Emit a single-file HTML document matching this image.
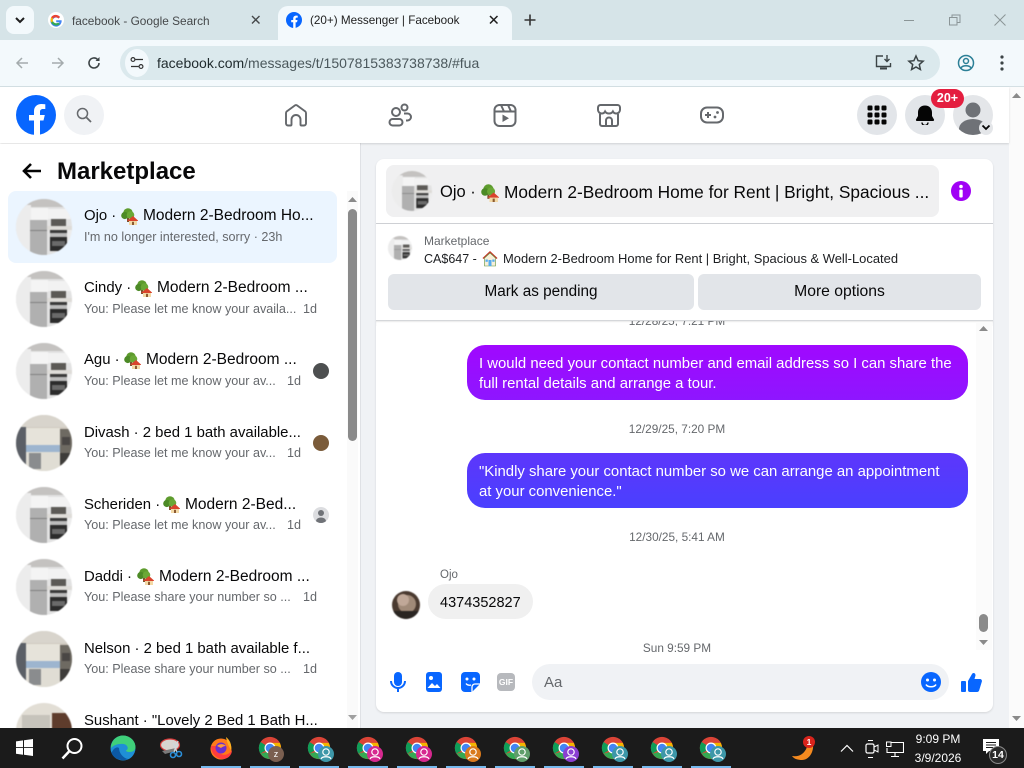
<!DOCTYPE html>
<html><head><meta charset="utf-8"><title>Messenger</title>
<style>
*{box-sizing:border-box}
html,body{margin:0;padding:0;width:1024px;height:768px;overflow:hidden;background:#fff;font-family:"Liberation Sans",sans-serif}
.a{position:absolute}
.t{position:absolute;white-space:nowrap;line-height:20px;height:20px}
.n{font-size:14.9px;color:#080809;margin-top:1px}
.m{font-size:15.5px;color:#080809;margin-top:1px}
.s{font-size:12.6px;color:#65686c;margin-top:1px}
.c{border-radius:50%;overflow:hidden}
svg{position:absolute;overflow:hidden}
svg.c{filter:blur(.5px)}
.ts{font-size:11.8px;color:#65686c;text-align:center;left:377px;width:600px}
.ul{position:absolute;top:766px;width:40px;height:2px;background:#76b9ed}
.b{font-size:14.9px;color:#fff;margin-top:1px}
</style></head><body>
<svg width="0" height="0" style="position:absolute">
<defs>
<symbol id="k1" viewBox="0 0 56 56">
<rect width="56" height="56" fill="#e2e2e2"/><rect width="56" height="8" fill="#c4c2c0"/>
<rect x="0" y="6" width="15" height="50" fill="#ececec"/>
<rect x="15" y="9" width="17" height="12" fill="#f4f4f4"/><rect x="32" y="10" width="24" height="10" fill="#f2f2f2"/>
<rect x="14" y="21" width="17" height="35" fill="#b0b0b0"/><rect x="14" y="31" width="17" height="1" fill="#808080"/>
<rect x="35" y="20" width="15" height="7" fill="#5c5a56"/>
<rect x="31" y="27" width="25" height="4" fill="#dedcd8"/>
<rect x="34" y="31" width="17" height="3" fill="#3a3a3a"/><rect x="34" y="34" width="17" height="4" fill="#bbb"/><rect x="34" y="38" width="17" height="14" fill="#2c2c2c"/><rect x="36" y="42" width="13" height="5" fill="#6a6a6a"/>
<rect x="51" y="31" width="5" height="25" fill="#ececec"/>
</symbol>
<symbol id="k2" viewBox="0 0 56 56">
<rect width="56" height="56" fill="#cfc9bf"/><rect width="56" height="12" fill="#d8d4cc"/>
<rect x="0" y="12" width="10" height="44" fill="#5b5f66"/>
<rect x="10" y="13" width="34" height="17" fill="#e6e3da"/><rect x="10" y="30" width="34" height="7" fill="#9db5cf"/>
<rect x="10" y="37" width="34" height="19" fill="#e0ddd4"/><rect x="13" y="38" width="12" height="16" fill="#8a8c8e"/>
<rect x="44" y="14" width="12" height="42" fill="#6e6a62"/><rect x="46" y="22" width="8" height="8" fill="#4a4745"/><rect x="44" y="38" width="12" height="12" fill="#3e3c3a"/>
</symbol>
<symbol id="k3" viewBox="0 0 56 56">
<rect width="56" height="56" fill="#e2ded5"/><rect x="36" y="10" width="20" height="40" fill="#5e3c2c"/><rect x="6" y="12" width="28" height="40" fill="#c6c3bb"/>
</symbol>
<symbol id="th" viewBox="0 0 17 17">
<circle cx="7" cy="5" r="4.800" fill="#5d9b2d"/><circle cx="3.800" cy="7.500" r="3.600" fill="#4c8a26"/><circle cx="9.500" cy="7" r="3.800" fill="#6aa836"/><rect x="6" y="10" width="2" height="4" fill="#7a5230"/>
<path d="M6.500 12.500 12 8l5 4.500v.5H6.500z" fill="#d9432c"/><rect x="8" y="13" width="8" height="4" fill="#f3d9a6"/><rect x="11" y="13.800" width="2" height="3.200" fill="#8c5a32"/>
</symbol>
<symbol id="cr" viewBox="0 0 28 28">
<circle cx="14" cy="14" r="13" fill="#db4437"/>
<path d="M14 14 2.700 20.500A13 13 0 0 1 3 7z" fill="#0f9d58"/>
<path d="M3 20.600A13 13 0 0 0 14 27l6.500-11.300z" fill="#34a853"/>
<path d="M14 8h11.400A13 13 0 0 1 14 27l6-11z" fill="#f4b400"/>
<circle cx="14" cy="14" r="6.400" fill="#fff"/><circle cx="14" cy="14" r="5" fill="#4285f4"/>
</symbol>
<symbol id="pr" viewBox="0 0 16 16"><circle cx="8" cy="6" r="3.200" fill="none" stroke="#fff" stroke-width="1.200"/><path d="M3 13c1-3 9-3 10 0" fill="none" stroke="#fff" stroke-width="1.200"/></symbol>
</defs>
</svg>

<!-- tab strip -->
<div class="a" style="left:0;top:0;width:1024px;height:40px;background:#d6e4e8"></div>
<div class="a" style="left:6px;top:6px;width:28px;height:28px;border-radius:8px;background:#f3f9fc"></div>
<svg style="left:13px;top:15px" width="14" height="10"><path d="M3 3l4 4 4-4" fill="none" stroke="#1f1f1f" stroke-width="2"/></svg>
<svg style="left:48px;top:12px" width="16" height="16" viewBox="0 0 16 16"><circle cx="8" cy="8" r="8" fill="#fff"/><path d="M13.600 8.200H8.200v2h3.200a3.500 3.500 0 1 1-.9-3.700l1.500-1.500A5.600 5.600 0 1 0 13.600 8.200z" fill="#4285f4"/><path d="M3.100 5.200 5 6.600A3.500 3.500 0 0 1 10.500 6.500L12 5A5.600 5.600 0 0 0 3.100 5.200z" fill="#ea4335"/><path d="M2.600 8c0 .9.2 1.800.6 2.600L5 9.200a3.500 3.500 0 0 1 0-2.600L3.100 5.200C2.800 6 2.600 7 2.600 8z" fill="#fbbc05"/><path d="M3.200 10.600A5.600 5.600 0 0 0 12 12l-1.800-1.400A3.500 3.500 0 0 1 5 9.200z" fill="#34a853"/></svg>
<div class="t" style="left:72px;top:11px;font-size:11.850px;color:#45484a">facebook - Google Search</div>
<svg style="left:250px;top:14px" width="12" height="12"><path d="M2 2l7.500 7.500M9.500 2 2 9.500" stroke="#45484a" stroke-width="1.400"/></svg>
<div class="a" style="left:278px;top:6px;width:234px;height:34px;background:#f3f9fc;border-radius:10px 10px 0 0"></div>
<svg style="left:286px;top:12px" width="16" height="16" viewBox="0 0 40 40"><circle cx="20" cy="20" r="20" fill="#0866ff"/><path d="M27.500 25.500 28.800 20H24v-3c0-1.800.8-3 3-3h2.300V9.300c-1.300-.2-2.600-.3-3.800-.3-4.600 0-7.500 2.800-7.500 7.400V20h-5v5.500h5V40h6V25.500z" fill="#fff"/></svg>
<div class="t" style="left:310px;top:11px;font-size:11.700px;color:#1f1f1f">(20+) Messenger | Facebook</div>
<svg style="left:488px;top:14px" width="12" height="12"><path d="M2 2l7.500 7.500M9.500 2 2 9.500" stroke="#1f1f1f" stroke-width="1.500"/></svg>
<svg style="left:523px;top:13px" width="14" height="14"><path d="M7 1.500v11M1.500 7h11" stroke="#333" stroke-width="1.600"/></svg>
<svg style="left:903px;top:14px" width="12" height="12"><path d="M1 6.500h10" stroke="#8b9597"/></svg>
<svg style="left:949px;top:14px" width="12" height="12"><path d="M.5 3.500h7.500v7.500H.5zM3 3.500V1h8v7.500H8" fill="none" stroke="#8b9597"/></svg>
<svg style="left:994px;top:14px" width="12" height="12"><path d="M.5.5l11 11M11.500.5l-11 11" stroke="#8b9597"/></svg>

<!-- toolbar -->
<div class="a" style="left:0;top:40px;width:1024px;height:46px;background:#f3f9fc"></div>
<div class="a" style="left:0;top:86px;width:1024px;height:1px;background:#d5e0e4"></div>
<svg style="left:14px;top:55px" width="16" height="16"><path d="M14 8H3M8 3 3 8l5 5" fill="none" stroke="#a4abad" stroke-width="1.500"/></svg>
<svg style="left:50px;top:55px" width="16" height="16"><path d="M2 8h11M8 3l5 5-5 5" fill="none" stroke="#a4abad" stroke-width="1.500"/></svg>
<svg style="left:86px;top:55px" width="16" height="16"><path d="M13 8a5 5 0 1 1-1.500-3.600" fill="none" stroke="#3c4446" stroke-width="1.600"/><path d="M13.500 2v4h-4z" fill="#3c4446"/></svg>
<div class="a" style="left:120px;top:46px;width:820px;height:34px;border-radius:17px;background:#dbe9ed"></div>
<div class="a c" style="left:125px;top:49px;width:24px;height:28px;background:#f3f9fc"></div>
<svg style="left:130px;top:56px" width="14" height="14"><circle cx="3" cy="3.500" r="1.900" fill="none" stroke="#333" stroke-width="1.200"/><path d="M5.500 3.500H13M1 10.500h7.500" stroke="#333" stroke-width="1.300"/><circle cx="11" cy="10.500" r="1.900" fill="none" stroke="#333" stroke-width="1.200"/></svg>
<div class="t" style="left:157px;top:53px;font-size:14px;color:#1f2a2d">facebook.com<span style="color:#4b585c">/messages/t/1507815383738738/#fua</span></div>
<svg style="left:875px;top:54px" width="18" height="18"><path d="M8 2H1.500v10.500h14V9" fill="none" stroke="#3c4446" stroke-width="1.400"/><path d="M12 1v6M9.500 5 12 7.500 14.500 5" fill="none" stroke="#3c4446" stroke-width="1.400"/><path d="M5 14.500h7" stroke="#3c4446" stroke-width="2"/></svg>
<svg style="left:907px;top:54px" width="18" height="18" viewBox="0 0 18 18"><path d="M9 2l2.100 4.700 5 .5-3.800 3.300 1.100 5L9 13l-4.400 2.500 1.100-5L1.900 7.200l5-.5z" fill="none" stroke="#3c4446" stroke-width="1.500"/></svg>
<svg style="left:957px;top:54px" width="18" height="18"><circle cx="9" cy="9" r="7.500" fill="none" stroke="#2b7f96" stroke-width="1.500"/><circle cx="9" cy="7" r="2.500" fill="none" stroke="#2b7f96" stroke-width="1.500"/><path d="M4 14c1.500-3 8.500-3 10 0" fill="none" stroke="#2b7f96" stroke-width="1.500"/></svg>
<svg style="left:998px;top:55px" width="8" height="16"><circle cx="4" cy="2" r="1.600" fill="#3c4446"/><circle cx="4" cy="8" r="1.600" fill="#3c4446"/><circle cx="4" cy="14" r="1.600" fill="#3c4446"/></svg>

<!-- main background -->
<div class="a" style="left:360px;top:143px;width:649px;height:585px;background:#f0f2f5;border-left:1px solid #dfe1e5"></div>
<div class="a" style="left:1009px;top:87px;width:15px;height:641px;background:#fbfbfb"></div>
<svg style="left:1011px;top:92px" width="11" height="8"><path d="M5.500 1 10 6H1z" fill="#8a8a8a"/></svg>
<svg style="left:1011px;top:714px" width="11" height="8"><path d="M5.500 7 10 2H1z" fill="#8a8a8a"/></svg>

<!-- fb header -->
<div class="a" style="left:0;top:87px;width:1009px;height:56px;background:#fff;box-shadow:0 1px 2px rgba(0,0,0,.14)"></div>
<svg style="left:16px;top:95px" width="40" height="40" viewBox="0 0 40 40"><circle cx="20" cy="20" r="20" fill="#0866ff"/><path d="M27.500 25.500 28.800 20H24v-3c0-1.800.8-3 3-3h2.300V9.300c-1.300-.2-2.600-.3-3.800-.3-4.600 0-7.500 2.800-7.500 7.400V20h-5v5.500h5V40h6V25.500z" fill="#fff"/></svg>
<div class="a c" style="left:64px;top:95px;width:40px;height:40px;background:#f0f2f5"></div>
<svg style="left:76px;top:107px" width="16" height="16"><circle cx="6.500" cy="6.500" r="5" fill="none" stroke="#65686c" stroke-width="1.500"/><path d="M10.500 10.500 15 15" stroke="#65686c" stroke-width="1.800"/></svg>
<svg style="left:284px;top:103px" width="24" height="24" viewBox="0 0 24 24"><path d="M2 21V10.500a2 2 0 0 1 .8-1.600L10.800 3a2 2 0 0 1 2.400 0l8 5.900a2 2 0 0 1 .8 1.600V21a2 2 0 0 1-2 2h-2.500a1 1 0 0 1-1-1v-5a4.500 4.500 0 0 0-9 0v5a1 1 0 0 1-1 1H4a2 2 0 0 1-2-2z" fill="none" stroke="#65686c" stroke-width="1.900" transform="translate(0 -.5)"/></svg>
<svg style="left:388px;top:103px" width="24" height="24" viewBox="0 0 24 24"><circle cx="8" cy="9.500" r="4" fill="none" stroke="#65686c" stroke-width="2" transform="translate(0 -.5)"/><circle cx="16.500" cy="4.500" r="3" fill="none" stroke="#65686c" stroke-width="2"/><rect x="1.500" y="16" width="13" height="6.500" rx="3.200" fill="none" stroke="#65686c" stroke-width="2"/><path d="M16 10.500h3.500a3.500 3.500 0 0 1 0 7H18" fill="none" stroke="#65686c" stroke-width="2"/></svg>
<svg style="left:493px;top:103px" width="24" height="24" viewBox="0 0 24 24"><rect x="1.500" y="2" width="21" height="21" rx="5" fill="none" stroke="#65686c" stroke-width="2"/><path d="M1.500 8.500h21M8 2l3 6.500M15 2l3 6.500" fill="none" stroke="#65686c" stroke-width="2"/><path d="M9.500 11.500v7.500l6.500-3.700z" fill="#65686c"/></svg>
<svg style="left:597px;top:103px" width="24" height="24" viewBox="0 0 24 24"><path d="M3.500 2h17a2.500 2.500 0 0 1 2.500 2.500V7a3.700 3.700 0 0 1-3.700 3.500c-1.500 0-2.800-.8-3.400-2-.7 1.200-2.300 2-3.900 2s-3.200-.8-3.900-2c-.6 1.200-1.900 2-3.400 2A3.700 3.700 0 0 1 1 7V4.500A2.500 2.500 0 0 1 3.500 2z" fill="none" stroke="#65686c" stroke-width="2"/><path d="M3 11v10a2 2 0 0 0 2 2h14a2 2 0 0 0 2-2V11" fill="none" stroke="#65686c" stroke-width="2"/><path d="M9 23v-5.500a3 3 0 0 1 6 0V23" fill="none" stroke="#65686c" stroke-width="2"/></svg>
<svg style="left:700px;top:103px" width="24" height="24" viewBox="0 0 24 24"><rect x="1" y="4.500" width="22" height="15" rx="6" fill="none" stroke="#65686c" stroke-width="2"/><path d="M5 12h6M8 9v6" stroke="#65686c" stroke-width="2"/><circle cx="17.500" cy="9.500" r="1.400" fill="#65686c"/><circle cx="15" cy="14" r="1.400" fill="#65686c"/></svg>
<div class="a c" style="left:857px;top:95px;width:40px;height:40px;background:#e2e5e9"></div>
<svg style="left:867px;top:105px" width="20" height="20" viewBox="0 0 20 20"><g fill="#050505"><rect x="0.500" y="0.500" width="5" height="5" rx="1.200"/><rect x="7.500" y="0.500" width="5" height="5" rx="1.200"/><rect x="14.500" y="0.500" width="5" height="5" rx="1.200"/><rect x="0.500" y="7.500" width="5" height="5" rx="1.200"/><rect x="7.500" y="7.500" width="5" height="5" rx="1.200"/><rect x="14.500" y="7.500" width="5" height="5" rx="1.200"/><rect x="0.500" y="14.500" width="5" height="5" rx="1.200"/><rect x="7.500" y="14.500" width="5" height="5" rx="1.200"/><rect x="14.500" y="14.500" width="5" height="5" rx="1.200"/></g></svg>
<div class="a c" style="left:905px;top:95px;width:40px;height:40px;background:#e2e5e9"></div>
<svg style="left:915px;top:105px" width="20" height="20" viewBox="0 0 20 20"><path d="M10 .5c-4.300 0-7 3-7 7v3.500L1 14.500c-.3.700.1 1.500 1 1.500h16c.9 0 1.300-.8 1-1.500L17 11V7.500c0-4-2.700-7-7-7z" fill="#050505"/><path d="M7 17.500a3 3 0 0 0 6 0" fill="none" stroke="#050505" stroke-width="1.400"/></svg>
<div class="a c" style="left:953px;top:95px;width:40px;height:40px;background:#e4e6e9"></div>
<svg style="left:953px;top:95px;border-radius:50%" width="40" height="40"><circle cx="20" cy="15" r="7.500" fill="#6f7277"/><ellipse cx="20" cy="34" rx="14" ry="10" fill="#6f7277"/></svg>
<div class="a c" style="left:979px;top:121px;width:14px;height:14px;background:#e4e6e9"></div>
<svg style="left:981px;top:124px" width="10" height="8"><path d="M1.500 1.500 5 5l3.500-3.500" fill="none" stroke="#050505" stroke-width="1.800"/></svg>
<div class="a" style="left:931px;top:89px;width:33px;height:19px;border-radius:10px;background:#e41e3f;color:#fff;font-size:12.500px;font-weight:bold;text-align:center;line-height:19px">20+</div>

<!-- sidebar -->
<div class="a" style="left:0;top:144px;width:360px;height:584px;background:#fff"></div>
<svg style="left:21px;top:162px" width="20" height="18"><path d="M20 9H3M10 2 3 9l7 7" fill="none" stroke="#050505" stroke-width="2.600"/></svg>
<div class="t" style="left:57px;top:157px;font-size:24px;font-weight:bold;color:#080809;height:30px;line-height:30px">Marketplace</div>
<div class="a" style="left:8px;top:191px;width:329px;height:72px;border-radius:8px;background:#ebf5ff"></div>
<div class="a" style="left:347px;top:191px;width:11px;height:537px;background:#fafafa"></div>
<svg style="left:347px;top:196px" width="11" height="8"><path d="M5.500 1 10 6H1z" fill="#8a8a8a"/></svg>
<div class="a" style="left:348px;top:209px;width:9px;height:232px;border-radius:5px;background:#8a8a8a"></div>
<svg style="left:347px;top:713px" width="11" height="8"><path d="M5.500 7 10 2H1z" fill="#a0a0a0"/></svg>

<svg class="c" style="left:16px;top:199px" width="56" height="56"><use href="#k1"/></svg>
<svg class="c" style="left:16px;top:271px" width="56" height="56"><use href="#k1"/></svg>
<svg class="c" style="left:16px;top:343px" width="56" height="56"><use href="#k1"/></svg>
<svg class="c" style="left:16px;top:415px" width="56" height="56"><use href="#k2"/></svg>
<svg class="c" style="left:16px;top:487px" width="56" height="56"><use href="#k1"/></svg>
<svg class="c" style="left:16px;top:559px" width="56" height="56"><use href="#k1"/></svg>
<svg class="c" style="left:16px;top:631px" width="56" height="56"><use href="#k2"/></svg>
<svg class="c" style="left:16px;top:703px" width="56" height="56"><use href="#k3"/></svg>

<div class="t n" style="left:84px;top:205px">Ojo ·</div><svg style="left:121px;top:208px" width="17" height="17"><use href="#th"/></svg><div class="t m" style="left:143px;top:205px">Modern 2-Bedroom Ho...</div>
<div class="t s" style="left:84px;top:226px">I'm no longer interested, sorry · 23h</div>
<div class="t n" style="left:84px;top:277px">Cindy ·</div><svg style="left:135px;top:280px" width="17" height="17"><use href="#th"/></svg><div class="t m" style="left:157px;top:277px">Modern 2-Bedroom ...</div>
<div class="t s" style="left:84px;top:298px">You: Please let me know your availa...</div><div class="t s" style="left:303px;top:298px">1d</div>
<div class="t n" style="left:84px;top:349px">Agu ·</div><svg style="left:124px;top:352px" width="17" height="17"><use href="#th"/></svg><div class="t m" style="left:146px;top:349px">Modern 2-Bedroom ...</div>
<div class="t s" style="left:84px;top:370px">You: Please let me know your av...</div><div class="t s" style="left:287px;top:370px">1d</div>
<div class="a c" style="left:313px;top:363px;width:16px;height:16px;background:#4d4f50"></div>
<div class="t n" style="left:84px;top:422px">Divash · 2 bed 1 bath available...</div>
<div class="t s" style="left:84px;top:442px">You: Please let me know your av...</div><div class="t s" style="left:287px;top:442px">1d</div>
<div class="a c" style="left:313px;top:435px;width:16px;height:16px;background:#7a5b3a"></div>
<div class="t n" style="left:84px;top:494px">Scheriden ·</div><svg style="left:163px;top:496px" width="17" height="17"><use href="#th"/></svg><div class="t m" style="left:185px;top:494px">Modern 2-Bed...</div>
<div class="t s" style="left:84px;top:514px">You: Please let me know your av...</div><div class="t s" style="left:287px;top:514px">1d</div>
<svg style="left:313px;top:507px;border-radius:50%" width="16" height="16"><rect width="16" height="16" fill="#dcdde0"/><circle cx="8" cy="6" r="3" fill="#6f7277"/><ellipse cx="8" cy="14" rx="5" ry="3.500" fill="#6f7277"/></svg>
<div class="t n" style="left:84px;top:566px">Daddi ·</div><svg style="left:137px;top:568px" width="17" height="17"><use href="#th"/></svg><div class="t m" style="left:159px;top:566px">Modern 2-Bedroom ...</div>
<div class="t s" style="left:84px;top:586px">You: Please share your number so ...</div><div class="t s" style="left:303px;top:586px">1d</div>
<div class="t n" style="left:84px;top:638px">Nelson · 2 bed 1 bath available f...</div>
<div class="t s" style="left:84px;top:658px">You: Please share your number so ...</div><div class="t s" style="left:303px;top:658px">1d</div>
<div class="t n" style="left:84px;top:710px">Sushant · "Lovely 2 Bed 1 Bath H...</div>

<!-- chat panel -->
<div class="a" style="left:376px;top:159px;width:617px;height:553px;background:#fff;border-radius:8px;box-shadow:0 1px 2px rgba(0,0,0,.12)"></div>
<div class="a" style="left:386px;top:165px;width:553px;height:52px;background:#f0f0f1;border-radius:8px"></div>
<svg class="c" style="left:392px;top:171px" width="40" height="40"><use href="#k1"/></svg>
<div class="t" style="left:440px;top:182px;font-size:16.500px;color:#080809">Ojo ·</div>
<svg style="left:481px;top:184px" width="18" height="18"><use href="#th"/></svg>
<div class="t" style="left:504px;top:182px;font-size:17.300px;color:#080809">Modern 2-Bedroom Home for Rent | Bright, Spacious ...</div>
<svg style="left:951px;top:181px" width="20" height="20" viewBox="0 0 20 20"><circle cx="10" cy="10" r="10" fill="#a000f5"/><circle cx="10" cy="5.500" r="1.800" fill="#fff"/><rect x="8.300" y="8.500" width="3.400" height="8" rx="1" fill="#fff"/></svg>
<div class="a" style="left:376px;top:223px;width:617px;height:1px;background:#ced0d4"></div>
<svg class="c" style="left:388px;top:236px" width="24" height="24"><use href="#k1"/></svg>
<div class="t" style="left:424px;top:231px;font-size:12px;color:#65686c">Marketplace</div>
<div class="t" style="left:424px;top:249px;font-size:12.500px;color:#1c1e21">CA$647 -</div>
<svg style="left:482px;top:250px" width="16" height="18" viewBox="0 0 16 18"><path d="M8 1 .5 8l1 1L8 3l6.500 6 1-1z" fill="#c6392a"/><path d="M2.500 8 8 3l5.500 5v8h-11z" fill="#f7efd8" stroke="#5c913b" stroke-width=".6"/><rect x="6.500" y="10" width="3" height="6" fill="#55acee"/><rect x="3.500" y="9.500" width="2.300" height="2.300" fill="#55acee"/><rect x="10.300" y="9.500" width="2.300" height="2.300" fill="#55acee"/></svg>
<div class="t" style="left:503px;top:249px;font-size:12.950px;color:#1c1e21">Modern 2-Bedroom Home for Rent | Bright, Spacious &amp; Well-Located</div>
<div class="a" style="left:388px;top:274px;width:306px;height:36px;background:#e2e5e9;border-radius:6px;text-align:center;font-size:15.300px;line-height:36px;color:#080809">Mark as pending</div>
<div class="a" style="left:698px;top:274px;width:283px;height:36px;background:#e2e5e9;border-radius:6px;text-align:center;font-size:15.700px;line-height:36px;color:#080809">More options</div>

<div class="a" style="left:376px;top:320px;width:617px;height:6px;overflow:hidden;background:#fff;box-shadow:inset 0 2px 2px -1px rgba(0,0,0,.2)"></div>
<div class="t ts" style="top:311px;height:15px;line-height:20px;overflow:hidden;clip-path:inset(10px 0 0 0)">12/28/25, 7:21 PM</div>
<div class="a" style="left:376px;top:320px;width:617px;height:1px;background:#d5d7da"></div>

<div class="a" style="left:976px;top:322px;width:16px;height:328px;background:#fbfbfb"></div>
<svg style="left:978px;top:325px" width="11" height="8"><path d="M5.500 1 10 6H1z" fill="#8a8a8a"/></svg>
<div class="a" style="left:979px;top:614px;width:9px;height:18px;border-radius:5px;background:#8a8a8a"></div>
<svg style="left:978px;top:638px" width="11" height="8"><path d="M5.500 7 10 2H1z" fill="#8a8a8a"/></svg>

<div class="a" style="left:467px;top:345px;width:501px;height:55px;border-radius:18px;background:linear-gradient(#a008ff,#8e16ff)"></div>
<div class="t b" style="left:479px;top:353px">I would need your contact number and email address so I can share the</div>
<div class="t b" style="left:479px;top:373px">full rental details and arrange a tour.</div>
<div class="t ts" style="top:419px">12/29/25, 7:20 PM</div>
<div class="a" style="left:467px;top:453px;width:501px;height:55px;border-radius:18px;background:linear-gradient(#5d36fb,#4a40ff)"></div>
<div class="t b" style="left:479px;top:461px">"Kindly share your contact number so we can arrange an appointment</div>
<div class="t b" style="left:479px;top:481px">at your convenience."</div>
<div class="t ts" style="top:527px">12/30/25, 5:41 AM</div>
<div class="t" style="left:440px;top:565px;font-size:11.500px;color:#65686c">Ojo</div>
<svg class="c" style="left:392px;top:591px" width="28" height="28" viewBox="0 0 28 28"><rect width="28" height="28" fill="#4a3a30"/><circle cx="15" cy="13" r="9" fill="#a08a78"/><circle cx="11" cy="9" r="6" fill="#c0a898"/><rect y="20" width="28" height="8" fill="#2a2522"/></svg>
<div class="a" style="left:428px;top:584px;width:105px;height:35px;border-radius:18px;background:#f0f0f0"></div>
<div class="t" style="left:440px;top:593px;font-size:14.500px;color:#080809">4374352827</div>
<div class="t ts" style="top:638px">Sun 9:59 PM</div>

<svg style="left:389px;top:672px" width="18" height="20" viewBox="0 0 18 20"><rect x="5" y="0" width="8" height="14" rx="4" fill="#0866ff"/><path d="M2 9a7 7 0 0 0 14 0" fill="none" stroke="#0866ff" stroke-width="2"/><rect x="8" y="15" width="2" height="5" fill="#0866ff"/></svg>
<svg style="left:426px;top:672px" width="16" height="20" viewBox="0 0 16 20"><rect width="16" height="20" rx="3" fill="#0866ff"/><circle cx="5" cy="6" r="2" fill="#fff"/><path d="M1.500 16 6 11l3 3 2-2 3.500 4z" fill="#fff"/></svg>
<svg style="left:461px;top:672px" width="19" height="20" viewBox="0 0 19 20"><path d="M4 0h11a4 4 0 0 1 4 4v8l-8 8H4a4 4 0 0 1-4-4V4a4 4 0 0 1 4-4z" fill="#0866ff"/><circle cx="6" cy="7" r="1.500" fill="#fff"/><circle cx="13" cy="7" r="1.500" fill="#fff"/><path d="M5 11.500c1 1.500 3 2 5 1.500" fill="none" stroke="#fff" stroke-width="1.300"/><path d="M11 20v-5a3 3 0 0 1 3-3h5" fill="none" stroke="#fff" stroke-width="1.300"/></svg>
<div class="a" style="left:497px;top:673px;width:18px;height:18px;background:#b7b9bd;border-radius:4px;color:#fff;font-size:8.500px;font-weight:bold;text-align:center;line-height:18px">GIF</div>
<div class="a" style="left:532px;top:664px;width:417px;height:36px;border-radius:18px;background:#f0f2f5"></div>
<div class="t" style="left:544px;top:673px;font-size:15px;color:#65686c">Aa</div>
<svg style="left:921px;top:672px" width="20" height="20" viewBox="0 0 20 20"><circle cx="10" cy="10" r="10" fill="#0866ff"/><circle cx="6.500" cy="8" r="1.500" fill="#fff"/><circle cx="13.500" cy="8" r="1.500" fill="#fff"/><path d="M5 12.500c1.500 3 8.500 3 10 0" fill="none" stroke="#fff" stroke-width="1.500"/></svg>
<svg style="left:961px;top:672px" width="21" height="20" viewBox="0 0 21 20"><rect x="0" y="9" width="5" height="11" rx="1" fill="#0866ff"/><path d="M7 9l4-7c.8-1.500 3.500-1.500 3.500 1.500L13.500 7H19c1.500 0 2.300 1.500 1.800 2.800l-2.600 8.500c-.3 1-1 1.700-2.200 1.700H9a2 2 0 0 1-2-2z" fill="#0866ff"/></svg>

<!-- taskbar -->
<div class="a" style="left:0;top:728px;width:1024px;height:40px;background:#1b1b1b"></div>
<svg style="left:16px;top:739px" width="17" height="17" viewBox="0 0 17 17"><path d="M0 2.400 7 1.400v6.700H0zM8 1.300 17 0v8.100H8zM0 9h7v6.700L0 14.700zM8 9h9v8l-9-1.300z" fill="#fff"/></svg>
<svg style="left:60px;top:737px" width="24" height="24"><circle cx="14.500" cy="9" r="7" fill="none" stroke="#fff" stroke-width="2"/><path d="M9.500 14 2.500 21.500" stroke="#fff" stroke-width="2.500"/></svg>
<svg style="left:110px;top:735px" width="26" height="26" viewBox="0 0 26 26"><circle cx="13" cy="13" r="12.500" fill="#1f8fd6"/><path d="M1 13C1 5 7 .5 13 .5c7 0 12.500 5.500 12.500 11.500 0 3.500-3 5-6 5-2 0-3.500-.5-3.500-1.500 3-1 2-6-2.500-6.500C8 8.500 4 10 1 13z" fill="#3fd07a"/><path d="M9 13c0 5 4 10 9 11-6 3-14 0-16.500-6C3 14 6.500 11 9 13z" fill="#0c59a4"/></svg>
<svg style="left:160px;top:737px" width="24" height="22" viewBox="0 0 24 22"><ellipse cx="10" cy="8" rx="9.500" ry="6" fill="#d8d4d0" stroke="#d63b3b" stroke-width="1.200"/><path d="M2 14l14-3v3L5 17z" fill="#7a7a7a"/><path d="M13 6l4 9M18 4l-4 11" stroke="#cfd8dc" stroke-width="1.300"/><circle cx="13" cy="18" r="2.500" fill="none" stroke="#2b8fd9" stroke-width="1.600"/><circle cx="19" cy="17" r="2.500" fill="none" stroke="#2b8fd9" stroke-width="1.600"/></svg>
<svg style="left:209px;top:736px" width="24" height="24" viewBox="0 0 24 24"><circle cx="12" cy="13" r="10.500" fill="#ff7a1a"/><path d="M17 1c4 3 6 8 5 13-2-3-4-7-5-13z" fill="#ffb01f"/><path d="M2 10c0 8 6 13 12 13 5 0 9-4 9-9-2 4-7 6-11 4-3-1-5-5-4-8z" fill="#ff3d3d"/><circle cx="12" cy="12" r="5.500" fill="#6a2fd0"/><path d="M8 10c3-3 7-2 9 0-2 0-4 1-5 2z" fill="#ff9a3a"/></svg>

<svg style="left:258px;top:736px" width="24" height="24"><use href="#cr"/></svg><div class="a c" style="left:268px;top:746px;width:16px;height:16px;background:#7a5f50;color:#fff;font-size:9px;text-align:center;line-height:16px">z</div>
<svg style="left:307px;top:736px" width="24" height="24"><use href="#cr"/></svg><svg style="left:318px;top:746px;background:#3d97a8;border-radius:50%" width="16" height="16"><use href="#pr"/></svg>
<svg style="left:356px;top:736px" width="24" height="24"><use href="#cr"/></svg><svg style="left:367px;top:746px;background:#d6288f;border-radius:50%" width="16" height="16"><use href="#pr"/></svg>
<svg style="left:405px;top:736px" width="24" height="24"><use href="#cr"/></svg><svg style="left:416px;top:746px;background:#d6288f;border-radius:50%" width="16" height="16"><use href="#pr"/></svg>
<svg style="left:454px;top:736px" width="24" height="24"><use href="#cr"/></svg><svg style="left:465px;top:746px;background:#d97a1c;border-radius:50%" width="16" height="16"><use href="#pr"/></svg>
<svg style="left:503px;top:736px" width="24" height="24"><use href="#cr"/></svg><svg style="left:514px;top:746px;background:#5f9e6b;border-radius:50%" width="16" height="16"><use href="#pr"/></svg>
<svg style="left:552px;top:736px" width="24" height="24"><use href="#cr"/></svg><svg style="left:563px;top:746px;background:#8a3fd1;border-radius:50%" width="16" height="16"><use href="#pr"/></svg>
<svg style="left:601px;top:736px" width="24" height="24"><use href="#cr"/></svg><svg style="left:612px;top:746px;background:#3d97a8;border-radius:50%" width="16" height="16"><use href="#pr"/></svg>
<svg style="left:650px;top:736px" width="24" height="24"><use href="#cr"/></svg><svg style="left:661px;top:746px;background:#3d97a8;border-radius:50%" width="16" height="16"><use href="#pr"/></svg>
<svg style="left:699px;top:736px" width="24" height="24"><use href="#cr"/></svg><svg style="left:710px;top:746px;background:#3d97a8;border-radius:50%" width="16" height="16"><use href="#pr"/></svg>
<div class="ul" style="left:201px"></div><div class="ul" style="left:250px"></div><div class="ul" style="left:299px"></div><div class="ul" style="left:348px"></div><div class="ul" style="left:397px"></div><div class="ul" style="left:446px"></div><div class="ul" style="left:495px"></div><div class="ul" style="left:544px"></div><div class="ul" style="left:593px"></div><div class="ul" style="left:642px"></div><div class="ul" style="left:691px"></div>

<svg style="left:791px;top:738px" width="24" height="24" viewBox="0 0 24 24"><path d="M1 18c6 1 12-1 15-9 2-2 4-3 6-3 1 8-4 16-11 16-4 0-8-1-10-4z" fill="#f58a1f"/></svg>
<div class="a c" style="left:803px;top:736px;width:12px;height:12px;background:#d9241c;color:#fff;font-size:8.500px;text-align:center;line-height:12px;font-weight:bold">1</div>
<svg style="left:840px;top:744px" width="14" height="9"><path d="M1 7.500 7 1.500l6 6" fill="none" stroke="#fff" stroke-width="1.200"/></svg>
<svg style="left:865px;top:739px" width="14" height="20" viewBox="0 0 14 20"><rect x="1" y="5" width="8" height="9" rx="1.500" fill="none" stroke="#fff" stroke-width="1.200"/><path d="M9 8l4-2v7l-4-2z" fill="none" stroke="#fff" stroke-width="1"/><path d="M3 1.500h5M3 18.500h5" stroke="#fff" stroke-width="1"/></svg>
<svg style="left:886px;top:741px" width="18" height="17" viewBox="0 0 18 17"><path d="M4 1.500h13.500v10H1V7" fill="none" stroke="#fff" stroke-width="1.100"/><rect x=".5" y="1" width="4.500" height="4.500" fill="#1b1b1b" stroke="#fff"/><path d="M9 11.500v4M5 15.500h8" stroke="#fff" stroke-width="1.100"/></svg>
<div class="t" style="left:905px;top:730px;width:66px;text-align:center;font-size:12px;color:#fff;height:18px;line-height:18px">9:09 PM</div>
<div class="t" style="left:905px;top:749px;width:66px;text-align:center;font-size:12px;color:#fff;height:18px;line-height:18px">3/9/2026</div>
<svg style="left:983px;top:739px" width="17" height="16" viewBox="0 0 17 16"><path d="M0 0h16v12H6l-3 3v-3H0z" fill="#fff"/><path d="M3 3.500h10M3 6h10M3 8.500h7" stroke="#1b1b1b"/></svg>
<div class="a c" style="left:989px;top:746px;width:18px;height:18px;background:#2a2a2a;border:1px solid #8a8a8a;color:#fff;font-size:10.500px;text-align:center;line-height:16px;font-weight:bold">14</div>
</body></html>
